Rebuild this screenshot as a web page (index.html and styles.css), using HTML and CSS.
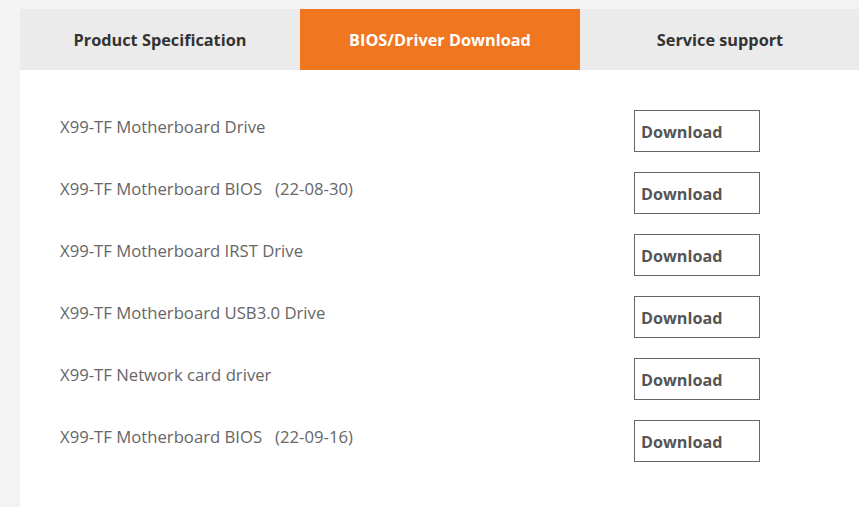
FILE: index.html
```html
<!DOCTYPE html>
<html>
<head>
<meta charset="utf-8">
<link rel="stylesheet" href="styles.css">
</head>
<body>
<div class="panel">
  <div class="tabs">
    <div class="tab">Product Specification</div>
    <div class="tab active">BIOS/Driver Download</div>
    <div class="tab">Service support</div>
  </div>
  <div class="list">
    <div class="row"><span class="name">X99-TF Motherboard Drive</span><a class="btn">Download</a></div>
    <div class="row"><span class="name">X99-TF Motherboard BIOS&nbsp;&nbsp;&nbsp;(22-08-30)</span><a class="btn">Download</a></div>
    <div class="row"><span class="name">X99-TF Motherboard IRST Drive</span><a class="btn">Download</a></div>
    <div class="row"><span class="name">X99-TF Motherboard USB3.0 Drive</span><a class="btn">Download</a></div>
    <div class="row"><span class="name">X99-TF Network card driver</span><a class="btn">Download</a></div>
    <div class="row"><span class="name">X99-TF Motherboard BIOS&nbsp;&nbsp;&nbsp;(22-09-16)</span><a class="btn">Download</a></div>
  </div>
</div>
</body>
</html>
```
FILE: styles.css
```css
html, body {
  margin: 0;
  padding: 0;
}
body {
  background: #f3f3f3;
  font-family: "Open Sans", "Noto Sans", sans-serif;
  padding: 9px 0 0 20px;
  height: 507px;
  box-sizing: border-box;
  overflow: hidden;
}
.panel {
  background: #fff;
  height: 100%;
}
.tabs {
  display: flex;
  background: #ebebeb;
}
.tab {
  width: 280px;
  flex: none;
  height: 61px;
  display: flex;
  align-items: center;
  justify-content: center;
  font-weight: bold;
  font-size: 16.3px;
  color: #333;
}
.tab.active {
  background: #f07620;
  color: #fff;
}
.list {
  padding: 40px 0 0 40px;
}
.row {
  display: flex;
  align-items: flex-start;
  height: 62px;
}
.name {
  width: 574px;
  font-size: 16.7px;
  color: #666;
  line-height: 22px;
  margin-top: 6px;
}
.btn {
  box-sizing: border-box;
  width: 126px;
  height: 42px;
  border: 1px solid #666;
  padding: 10px 0 0 6px;
  font-weight: bold;
  font-size: 16.2px;
  line-height: 22px;
  color: #555;
}
```
